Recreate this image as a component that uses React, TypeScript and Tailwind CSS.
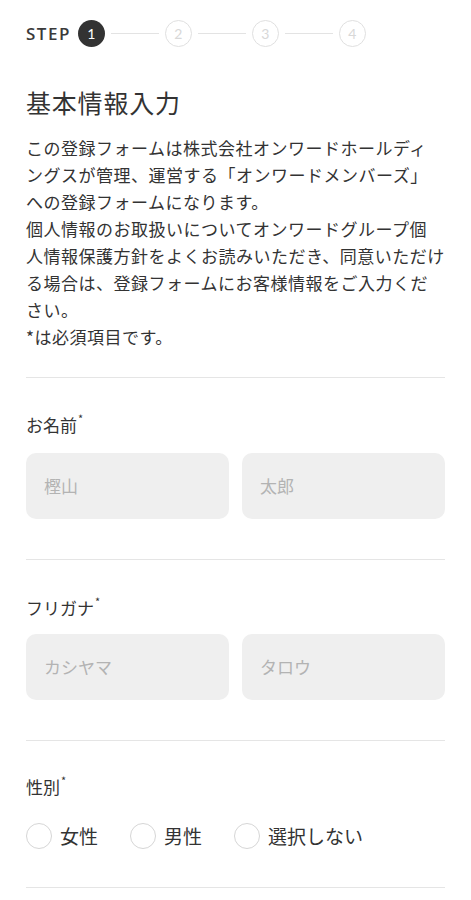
import React from "react";

const jp = { fontFamily: '"Noto Sans CJK JP", "Noto Sans", sans-serif' };

function StepCircle({ n, active }: { n: number; active?: boolean }) {
  return (
    <div
      className={
        active
          ? "w-[27px] h-[27px] rounded-full bg-[#333333] text-white flex items-center justify-center text-[14px]"
          : "w-[27px] h-[27px] rounded-full border-[1.5px] border-[#e0e0e0] text-[#d8d8d8] flex items-center justify-center text-[14px]"
      }
      style={{ fontFamily: "Lato, sans-serif" }}
    >
      {n}
    </div>
  );
}

function Line() {
  return <div className="w-[48px] h-[1.5px] bg-[#e3e3e3] mx-[6px]" />;
}

function Label({ children }: { children: React.ReactNode }) {
  return (
    <div className="text-[17px] leading-[20px] text-[#333333] flex items-start" style={jp}>
      <span>{children}</span>
      <span className="text-[11px] leading-[11px] ml-[1px] -mt-[2px]">*</span>
    </div>
  );
}

function Input({ placeholder }: { placeholder: string }) {
  return (
    <div
      className="flex-1 h-[66px] rounded-[10px] bg-[#efefef] flex items-center pl-[18px] text-[17px] text-[#b3b3b3]"
      style={jp}
    >
      {placeholder}
    </div>
  );
}

function Radio({ label }: { label: string }) {
  return (
    <div className="flex items-center gap-[8px]">
      <div className="w-[26px] h-[26px] rounded-full border-[1.5px] border-[#d6d6d6] bg-white" />
      <span className="text-[19px] text-[#333333]" style={jp}>
        {label}
      </span>
    </div>
  );
}

export default function App() {
  return (
    <div className="w-[471px] min-h-[900px] bg-white px-[26px] pt-[20px]" style={jp}>
      <div className="flex items-center">
        <span
          className="text-[17px] font-semibold tracking-[1.5px] text-[#3a3a3a] mr-[7px]"
          style={{ fontFamily: '"Open Sans", Lato, sans-serif' }}
        >
          STEP
        </span>
        <StepCircle n={1} active />
        <Line />
        <StepCircle n={2} />
        <Line />
        <StepCircle n={3} />
        <Line />
        <StepCircle n={4} />
      </div>

      <h1 className="mt-[38px] text-[25px] leading-[35px] text-[#333333] tracking-[0.8px]">基本情報入力</h1>

      <p className="mt-[14px] text-[17px] leading-[27px] text-[#333333] tracking-[0.5px] whitespace-nowrap">
        この登録フォームは株式会社オンワードホールディ
        <br />
        ングスが管理、運営する「オンワードメンバーズ」
        <br />
        への登録フォームになります。
        <br />
        個人情報のお取扱いについてオンワードグループ個
        <br />
        人情報保護方針をよくお読みいただき、同意いただけ
        <br />
        る場合は、登録フォームにお客様情報をご入力くだ
        <br />
        さい。
        <br />
        *は必須項目です。
      </p>

      <div className="mt-[27px] border-t border-[#e5e5e5] pt-[37px] pb-[40px]">
        <Label>お名前</Label>
        <div className="mt-[18px] flex gap-[13px]">
          <Input placeholder="樫山" />
          <Input placeholder="太郎" />
        </div>
      </div>

      <div className="border-t border-[#e5e5e5] pt-[38px] pb-[40px]">
        <Label>フリガナ</Label>
        <div className="mt-[16px] flex gap-[13px]">
          <Input placeholder="カシヤマ" />
          <Input placeholder="タロウ" />
        </div>
      </div>

      <div className="border-t border-[#e5e5e5] pt-[36px] pb-[36px]">
        <Label>性別</Label>
        <div className="mt-[25px] flex items-center gap-[32px]">
          <Radio label="女性" />
          <Radio label="男性" />
          <Radio label="選択しない" />
        </div>
      </div>

      <div className="border-t border-[#e5e5e5]" />
    </div>
  );
}
